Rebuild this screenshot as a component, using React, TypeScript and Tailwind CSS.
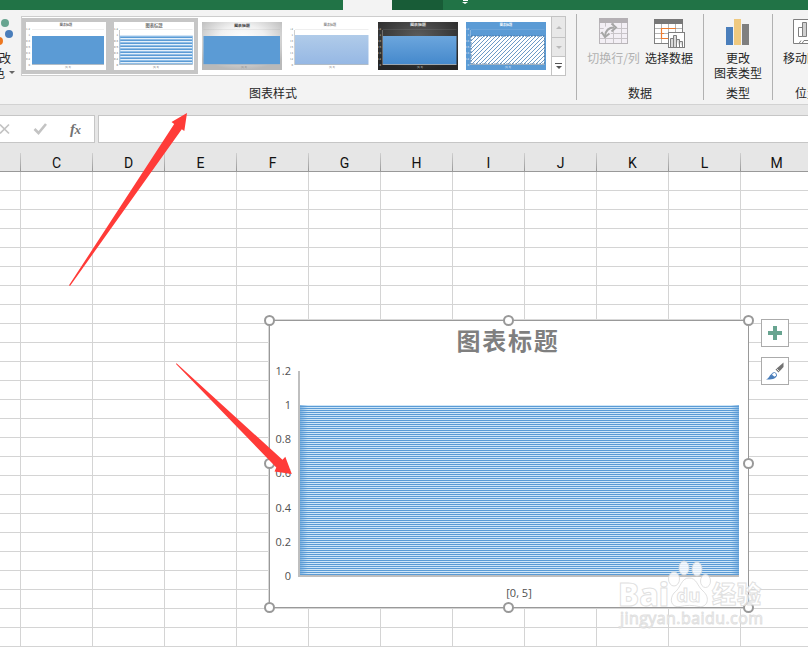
import React from 'react';

const columns = ['C', 'D', 'E', 'F', 'G', 'H', 'I', 'J', 'K', 'L', 'M'];
const rows = Array.from({ length: 25 }, (_, i) => i + 1);
const ticks = ['1.2', '1', '0.8', '0.6', '0.4', '0.2', '0'];

type ThumbKind = 'solid' | 'striped' | 'silver' | 'pale' | 'dark' | 'hatched';

const thumbColors: Record<ThumbKind, { bg: string; fill: string; title: string; label: string; top: number }> = {
  solid: { bg: '#ffffff', fill: '#5b9bd5', title: '#666666', label: '#777777', top: 14 },
  striped: { bg: '#ffffff', fill: 'url(#thumb-stripes)', title: '#777777', label: '#666666', top: 14 },
  silver: { bg: 'url(#thumb-silver)', fill: '#5b9bd5', title: '#333333', label: '#888888', top: 14 },
  pale: { bg: '#ffffff', fill: 'url(#thumb-pale)', title: '#888888', label: '#777777', top: 13 },
  dark: { bg: 'url(#thumb-dark)', fill: 'url(#thumb-blue)', title: '#e6e6e6', label: '#d0d0d0', top: 14 },
  hatched: { bg: '#5b9bd5', fill: 'url(#thumb-hatch)', title: '#ffffff', label: '#e4eefa', top: 14 },
};

const ThumbDefs: React.FC = () => (
  <defs>
    <pattern id="thumb-stripes" width="2" height="3" patternUnits="userSpaceOnUse">
      <rect width="2" height="3" fill="#5b9bd5" />
      <rect width="2" height="1" y="1" fill="#e4f0fa" />
      <rect width="2" height="1" y="2" fill="#8fbde6" />
    </pattern>
    <pattern id="thumb-hatch" width="4" height="4" patternUnits="userSpaceOnUse">
      <rect width="4" height="4" fill="#ffffff" />
      <path d="M-1 1L1 -1M0 4L4 0M3 5L5 3" stroke="#5b8fbf" strokeWidth="0.9" />
    </pattern>
    <radialGradient id="thumb-silver" cx="50%" cy="35%" r="65%">
      <stop offset="0" stopColor="#ffffff" />
      <stop offset="0.45" stopColor="#f0f0f0" />
      <stop offset="1" stopColor="#b9b9b9" />
    </radialGradient>
    <radialGradient id="thumb-dark" cx="50%" cy="30%" r="70%">
      <stop offset="0" stopColor="#5c5c5c" />
      <stop offset="1" stopColor="#262626" />
    </radialGradient>
    <linearGradient id="thumb-pale" x1="0" y1="0" x2="0" y2="1">
      <stop offset="0" stopColor="#b0cbe9" />
      <stop offset="1" stopColor="#96b8e4" />
    </linearGradient>
    <linearGradient id="thumb-blue" x1="0" y1="0" x2="0" y2="1">
      <stop offset="0" stopColor="#6ca6dd" />
      <stop offset="1" stopColor="#4589cc" />
    </linearGradient>
  </defs>
);

const ChartThumb: React.FC<{ kind: ThumbKind }> = ({ kind }) => {
  const c = thumbColors[kind];
  const left = kind === 'silver' ? 1.5 : kind === 'solid' || kind === 'striped' ? 6 : 5;
  const right = kind === 'solid' || kind === 'silver' ? 78 : 78.5;
  return (
    <svg className="block h-12 w-20" viewBox="0 0 80 48">
      <ThumbDefs />
      <rect width="80" height="48" fill={c.bg} />
      <path d={`M${left} 7.5H${right}`} stroke={c.label} strokeOpacity="0.2" strokeWidth="0.6" />
      {kind !== 'silver' && kind !== 'solid' && (
        <path d={`M${left - 0.5} 8V43`} stroke={c.label} strokeOpacity="0.35" strokeWidth="1" />
      )}
      <rect
        x={left}
        y={c.top}
        width={right - left}
        height={42 - c.top}
        fill={c.fill}
        stroke={kind === 'hatched' ? '#44719e' : kind === 'striped' ? '#8fbde6' : 'none'}
        strokeWidth="0.8"
        strokeDasharray={kind === 'hatched' ? '2 1' : undefined}
      />
      <path d={`M${left} 42.5H${right}`} stroke="#a8b4c0" strokeWidth="0.9" />
      {kind !== 'silver' &&
        ticks.map((t, i) => (
          <text key={t} x={left - 2} y={8.2 + i * 6} fontSize="2.8" textAnchor="end" fill={c.label}>
            {t}
          </text>
        ))}
      <text
        x="40"
        y={kind === 'silver' || kind === 'striped' ? 5.4 : 4.4}
        fontSize={kind === 'striped' ? 4.3 : kind === 'silver' || kind === 'dark' ? 3.9 : 3.1}
        fontWeight="700"
        textAnchor="middle"
        fill={c.title}
      >
        图表标题
      </text>
      <text x="42" y="46.4" fontSize="2.6" textAnchor="middle" fill={c.label}>
        [0, 5]
      </text>
    </svg>
  );
};

const SwitchRowColIcon: React.FC = () => (
  <svg className="block h-[30px] w-[30px]" viewBox="0 0 30 30" fill="none">
    <rect x="0.5" y="0.5" width="28" height="25" fill="#f3eff5" stroke="#b9b5b9" />
    <rect width="29" height="5" fill="#b4b0b4" />
    <path d="M1 10.5H28M1 15.5H28M1 20.5H28M6.5 5V25M14.5 5V25M22.5 5V25" stroke="#c8c4c8" />
    <path d="M3 14Q5 7 13 6L18 10L13 14L8 20Z" fill="#f3eff5" />
    <path d="M6 18Q7 9.500 15 9.500" stroke="#a6a6a6" strokeWidth="2" />
    <path d="M12.500 5.500L17 9.500L12.500 13.500M2.500 14L6 19L10.500 15.500" stroke="#a6a6a6" strokeWidth="2" />
  </svg>
);

const SelectDataIcon: React.FC = () => (
  <svg className="block h-[30px] w-8" viewBox="0 0 32 30" fill="none">
    <rect x="0.5" y="0.5" width="28" height="24" fill="#ffffff" stroke="#7f7f7f" />
    <rect width="29" height="5" fill="#777777" />
    <path d="M1 9.500H28M1 14.500H28M1 19.500H28M7.500 5V24M14.500 5V24M21.500 5V24" stroke="#b5b5b5" />
    <path d="M22 9.500H7.500V19.500H14M7.500 14.500H10M14 14.500H20" stroke="#ed7d31" strokeWidth="1.200" />
    <rect x="14.500" y="13.500" width="16" height="15" fill="#ffffff" stroke="#7f7f7f" />
    <path d="M16.500 28V19.500H19.500V28M19.500 28V16.500H22.500V28M22.500 20.500H25.500V28M25.500 22.500H28.500V28" fill="#d9d9d9" stroke="#7f7f7f" />
  </svg>
);

const MoveChartIcon: React.FC = () => (
  <svg className="block h-[30px] w-7" viewBox="0 0 28 30" fill="none">
    <path d="M0.500 24.500V0.500H27.500V24.500Z" fill="#ffffff" stroke="#7f7f7f" />
    <path d="M5.500 17.500V8.500H9.500V17.500Z" fill="#ffffff" stroke="#7f7f7f" />
    <path d="M9.500 17.500V3.500H13.500V17.500Z" fill="#d0d0d0" stroke="#7f7f7f" />
    <path d="M1 24.500H6L8 21.500M9 24.500L11 21.500H18V24.500Z" stroke="#7f7f7f" fill="#ffffff" />
  </svg>
);

const Ribbon: React.FC = () => (
  <div className="flex h-[95px] shrink-0 border-b border-[#d2d2d2] bg-[#f3f3f3] text-[12px] leading-[15px] whitespace-nowrap text-[#262626]">
    <div className="w-[21px] shrink-0 overflow-hidden">
      <svg className="block h-10 w-[21px]" viewBox="0 0 21 40">
        <circle cx="5" cy="13" r="4" fill="#68a490" />
        <circle cx="9" cy="24" r="4" fill="#4a7ebb" />
        <circle cx="-1" cy="31" r="4" fill="#ed7720" />
      </svg>
      <div className="-ml-px">改</div>
      <div className="-ml-[7px] flex items-center">
        色
        <span className="ml-[4px] h-0 w-0 border-x-[3px] border-t-[3px] border-x-transparent border-t-[#666666]" />
      </div>
    </div>

    {/* Chart styles */}
    <div className="flex w-[555px] shrink-0 flex-col pt-[6px]">
      <div className="flex h-[60px] w-[545px] border border-[#cdcdcd] bg-white">
        <div className="mt-px flex h-14 gap-2 bg-[#c6c6c6] p-1">
          <ChartThumb kind="solid" />
          <ChartThumb kind="striped" />
        </div>
        <div className="mt-[5px] ml-1 flex gap-2">
          <ChartThumb kind="silver" />
          <ChartThumb kind="pale" />
          <ChartThumb kind="dark" />
          <ChartThumb kind="hatched" />
        </div>
        <div className="-my-px -mr-px ml-auto flex w-[15px] flex-col border border-[#c3c3c3]">
          <div className="flex h-[20px] items-center justify-center bg-[#e8e8e8]">
            <span className="border-x-[3px] border-b-[3px] border-x-transparent border-b-[#b9b9b9]" />
          </div>
          <div className="flex h-[20px] items-center justify-center border-y border-[#c3c3c3] bg-[#e8e8e8]">
            <span className="border-x-[3px] border-t-[3px] border-x-transparent border-t-[#b9b9b9]" />
          </div>
          <div className="flex flex-1 flex-col items-center justify-center gap-[2px] bg-white">
            <span className="h-px w-[7px] bg-[#555555]" />
            <span className="border-x-[3px] border-t-[3px] border-x-transparent border-t-[#555555]" />
          </div>
        </div>
      </div>
      <div className="mt-auto mb-1 pr-[51px] text-center">图表样式</div>
    </div>

    {/* Data */}
    <div className="mt-1 mb-1 flex w-[127px] shrink-0 flex-col border-l border-[#b1b1b1]">
      <div className="flex pt-1">
        <div className="ml-[10px] flex w-[53px] flex-col items-center text-[#b1b1b1]">
          <SwitchRowColIcon />
          <span className="mt-[2px]">切换行/列</span>
        </div>
        <div className="ml-[5px] flex w-12 flex-col items-center pt-px">
          <div className="pl-[2px]">
            <SelectDataIcon />
          </div>
          <span className="mt-px">选择数据</span>
        </div>
      </div>
      <div className="mt-auto text-center">数据</div>
    </div>

    {/* Type */}
    <div className="mt-1 mb-1 flex w-[69px] shrink-0 flex-col items-center border-l border-[#b1b1b1]">
      <svg className="mt-[5px] block h-[26px] w-6" viewBox="0 0 24 26">
        <rect y="8" width="7" height="18" fill="#4a7ebb" />
        <rect x="8" width="7" height="26" fill="#efc97f" />
        <rect x="16" y="5" width="7" height="21" fill="#7f7f7f" />
      </svg>
      <div className="mt-[5px]">更改</div>
      <div>图表类型</div>
      <div className="mt-auto">类型</div>
    </div>

    {/* Location */}
    <div className="mt-1 mb-1 flex w-[69px] shrink-0 flex-col items-center border-l border-[#b1b1b1]">
      <div className="mt-[5px]">
        <MoveChartIcon />
      </div>
      <div className="mt-px">移动图表</div>
      <div className="mt-auto">位置</div>
    </div>
  </div>
);

const FormulaBar: React.FC = () => (
  <div className="flex h-[48px] shrink-0 gap-[3px] bg-[#e6e6e6] pt-[10px]">
    <div className="flex h-7 w-[95px] items-center border border-l-0 border-[#c6c6c6] bg-white">
      <svg className="block h-[26px] w-[60px]" viewBox="0 0 60 26" fill="none">
        <path d="M0 8.500L9 17.500M9 8.500L0 17.500" stroke="#c3c3c3" strokeWidth="1.700" />
        <path d="M34.500 13L38.500 17L46 8" stroke="#c3c3c3" strokeWidth="2.600" />
      </svg>
      <span className="ml-[10px] font-['Liberation_Serif',serif] text-[15px] leading-none tracking-[-0.5px] font-bold text-[#737373] italic">
        f<span className="text-[13px]">x</span>
      </span>
    </div>
    <div className="h-7 flex-1 border border-r-0 border-[#c6c6c6] bg-white" />
  </div>
);

const HeaderDivider: React.FC = () => (
  <span className="w-px shrink-0 bg-linear-to-b from-[#d0d0d0] to-[#999999]" />
);

const Sheet: React.FC = () => (
  <div className="shrink-0">
    <div className="flex h-[19px] border-b border-[#999999] bg-[#e6e6e6]">
      <div className="w-5 shrink-0" />
      <HeaderDivider />
      {columns.map((c) => (
        <div key={c} className="flex w-[72px] shrink-0">
          <span className="flex-1 text-center font-['Roboto',sans-serif] text-[14px] leading-[21px] text-[#111111]">{c}</span>
          <HeaderDivider />
        </div>
      ))}
    </div>
    {rows.map((r) => (
      <div key={r} className="flex h-[19px] border-b border-[#d4d4d4] bg-white">
        <div className="w-[21px] shrink-0 border-r border-[#d4d4d4]" />
        {columns.map((c) => (
          <div key={c} className="w-[72px] shrink-0 border-r border-[#d4d4d4]" />
        ))}
      </div>
    ))}
  </div>
);

const Handle: React.FC<{ className: string }> = ({ className }) => (
  <span className={`absolute h-[11px] w-[11px] rounded-full border-2 border-[#999999] bg-white ${className}`} />
);

const ChartObject: React.FC = () => (
  <div className="absolute top-[320px] left-[269px] h-[288px] w-[480px] border border-[#999999] bg-white font-['Open_Sans',sans-serif] text-[11px] text-[#505050] shadow-[-1px_-1px_0_#d9d9d9]">
    <div className="flex h-full flex-col">
      <h2 className="h-[50px] pt-px pr-[2px] text-center font-['Noto_Sans_CJK_SC',sans-serif] text-[24px] leading-[36px] font-bold tracking-[1.8px] text-[#7f7f7f]">
        图表标题
      </h2>
      <div className="flex h-[206px]">
        <div className="-mt-2 flex h-[220px] w-[21px] flex-col justify-between text-right leading-[15px]">
          {ticks.map((t) => (
            <span key={t}>{t}</span>
          ))}
        </div>
        <div className="ml-[7px] flex h-[206px] w-[441px] flex-col justify-end border-b-2 border-l-2 border-[#bfbfbf]">
          <div className="relative h-[170px] bg-[repeating-linear-gradient(to_bottom,#cfe6f8_0px,#cfe6f8_1px,#5b9bd5_1px,#5b9bd5_2px)]">
            <div className="absolute inset-0 bg-[linear-gradient(to_right,#5b9bd5b0_0px,#5b9bd500_8px,#5b9bd500_431px,#5b9bd5b0_439px)]" />
          </div>
        </div>
      </div>
      <div className="pt-[8px] pl-[20px] text-center leading-[15px]">[0, 5]</div>
    </div>
    <Handle className="-top-[6px] -left-[6px]" />
    <Handle className="-top-[6px] left-[233px]" />
    <Handle className="-top-[6px] -right-[6px]" />
    <Handle className="top-[137px] -left-[6px]" />
    <Handle className="top-[137px] -right-[6px]" />
    <Handle className="-bottom-[6px] -left-[6px]" />
    <Handle className="-bottom-[6px] left-[233px]" />
    <Handle className="-right-[6px] -bottom-[6px]" />
  </div>
);

const ChartButtons: React.FC = () => (
  <div className="absolute top-[319px] left-[761px] flex flex-col gap-[10px]">
    <button className="flex h-7 w-7 items-center justify-center border border-[#ababab] bg-white">
      <svg className="block h-[14px] w-[14px]" viewBox="0 0 14 14">
        <path d="M5 0H9V5H14V9H9V14H5V9H0V5H5Z" fill="#68a490" />
      </svg>
    </button>
    <button className="flex h-7 w-7 items-center justify-center border border-[#ababab] bg-white">
      <svg className="block h-[18px] w-[18px]" viewBox="0 0 18 18">
        <path d="M17.500 0.500V5L12.500 10.500L9.500 7.500Z" fill="#737373" />
        <path d="M10.500 6.500L13.500 9.500" stroke="#ffffff" strokeWidth="0.800" />
        <path d="M0 17.500C3 16.500 3 14 5 12.500C7 10.500 10.500 12 10.500 14C10 17 5 17.500 0 17.500Z" fill="#4a7ebb" />
        <path d="M5.500 13Q6 10.500 8.500 10.500Q11 11 10.500 14L8.500 15Z" fill="#ffffff" stroke="#4a7ebb" strokeWidth="0.900" />
      </svg>
    </button>
  </div>
);

const Watermark: React.FC = () => (
  <svg className="absolute top-[555px] left-[612px] h-[80px] w-[160px]" viewBox="0 0 160 80">
    <g
      fill="#ffffff"
      fillOpacity="0.8"
      stroke="#d8d8d8"
      strokeOpacity="0.8"
      strokeWidth="1"
      fontFamily="'Open Sans', 'Noto Sans CJK SC', sans-serif"
      fontWeight="700"
    >
      <text x="6" y="50.500" fontSize="32" fontWeight="800" textLength="51" lengthAdjust="spacingAndGlyphs">Bai</text>
      <ellipse cx="62" cy="24" rx="5.500" ry="7" />
      <ellipse cx="72" cy="13" rx="5" ry="7" />
      <ellipse cx="85" cy="14" rx="5" ry="7" />
      <ellipse cx="93.500" cy="26" rx="5" ry="6.500" />
      <path d="M77 23C85 23 85 31 91 36C99 43 95 53 87 51.500C81 50 74 50 68 51.500C59 53 57 44 62 38C69 33 69 23 77 23Z" />
      <text x="64.500" y="47" fontSize="18" textLength="24" lengthAdjust="spacingAndGlyphs">du</text>
      <text x="100" y="48" fontSize="24" fontWeight="900" textLength="49">经验</text>
      <text x="8" y="69" fontSize="16" fontWeight="400" textLength="143">jingyan.baidu.com</text>
    </g>
  </svg>
);

const Arrows: React.FC = () => (
  <svg className="absolute top-0 left-0 h-[647px] w-[808px]" viewBox="0 0 808 647">
    <g fill="#ff3b38">
      <path d="M187 113L184.300 131L181.800 129.300L70 286L69 285.300L174.200 124L171.500 122Z" />
      <path d="M291.800 474L274.500 471.500L276.300 467.500L176 364L176.500 363.300L282.500 459.800L285.300 456.800Z" />
    </g>
  </svg>
);

const App: React.FC = () => {
  return (
    <div className="relative flex h-[647px] w-[808px] flex-col overflow-hidden bg-white font-['Noto_Sans_CJK_SC',sans-serif]">
      {/* Title bar */}
      <div className="flex h-[10px] shrink-0 bg-[#217346]">
        <div className="w-[343px]" />
        <div className="w-[49px] bg-[#f3f3f3]" />
        <div className="w-[51px] bg-[#185c37]" />
        <div className="flex flex-col items-center pl-[19px]">
          <span className="h-px w-[5px] bg-white" />
          <span className="mt-px border-x-[3px] border-t-2 border-x-transparent border-t-white" />
        </div>
      </div>
      <Ribbon />
      <FormulaBar />
      <Sheet />

      {/* Floating objects */}
      <ChartObject />
      <ChartButtons />
      <Watermark />
      <Arrows />
    </div>
  );
};

export default App;
